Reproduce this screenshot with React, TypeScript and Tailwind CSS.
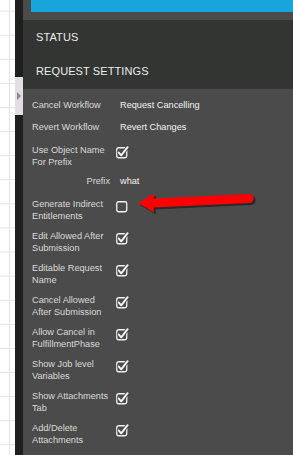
import React from "react";

const Check = ({ checked }: { checked: boolean }) => (
  <svg width="14" height="13" viewBox="0 0 14 13" className="block">
    <rect x="0.75" y="1.75" width="10" height="10" rx="1.8" fill="none" stroke="#f2f2f2" strokeWidth="1.3" />
    {checked && (
      <>
        <path d="M2.6 6.4 L5.2 9.4 L11.6 1.2" fill="none" stroke="#4b4b4b" strokeWidth="3.6" strokeLinecap="round" strokeLinejoin="round" />
        <path d="M2.6 6.4 L5.2 9.4 L11.6 1.2" fill="none" stroke="#f4f4f4" strokeWidth="1.9" strokeLinecap="round" strokeLinejoin="round" />
      </>
    )}
  </svg>
);

type Row =
  | { label: string[]; kind: "text"; value: string; h: string }
  | { label: string[]; kind: "check"; checked: boolean; h: string }
  | { label: string[]; kind: "prefix"; value: string; h: string };

const rows: Row[] = [
  { label: ["Cancel Workflow"], kind: "text", value: "Request Cancelling", h: "h-[22px]" },
  { label: ["Revert Workflow"], kind: "text", value: "Revert Changes", h: "h-[23px]" },
  { label: ["Use Object Name", "For Prefix"], kind: "check", checked: true, h: "h-[31px]" },
  { label: ["Prefix"], kind: "prefix", value: "what", h: "h-[23px]" },
  { label: ["Generate Indirect", "Entitlements"], kind: "check", checked: false, h: "h-[32px]" },
  { label: ["Edit Allowed After", "Submission"], kind: "check", checked: true, h: "h-[32px]" },
  { label: ["Editable Request", "Name"], kind: "check", checked: true, h: "h-[32px]" },
  { label: ["Cancel Allowed", "After Submission"], kind: "check", checked: true, h: "h-[32px]" },
  { label: ["Allow Cancel in", "FulfillmentPhase"], kind: "check", checked: true, h: "h-[32px]" },
  { label: ["Show Job level", "Variables"], kind: "check", checked: true, h: "h-[32px]" },
  { label: ["Show Attachments", "Tab"], kind: "check", checked: true, h: "h-[32px]" },
  { label: ["Add/Delete", "Attachments"], kind: "check", checked: true, h: "h-[32px]" },
];

const ARROW = "M3 13 L19 3.5 L18.5 8.5 L114 4 Q118.5 4 118.5 8.3 Q118.5 12.6 114 12.9 L18.5 17.5 L19 22.5 Z";

export default function App() {
  return (
    <div
      className="flex h-[455px] w-[293px] overflow-hidden"
      style={{ fontFamily: '"Liberation Sans", Arial, sans-serif' }}
    >
      {/* left grid canvas */}
      <div className="w-[15px] shrink-0 bg-white bg-[linear-gradient(to_bottom,transparent_11px,#e3e3e3_11px,#e3e3e3_12px,transparent_12px),linear-gradient(to_right,transparent_9px,#e3e3e3_9px,#e3e3e3_10px,transparent_10px)] bg-[length:100%_24.1px,100%_100%]" />
      {/* dark strip with tab */}
      <div className="flex w-[8px] shrink-0 flex-col bg-[#1f1f1f]">
        <div className="h-[77px]" />
        <div className="flex h-[38px] items-center justify-start bg-[#e2dfe2] pl-[2px]">
          <div className="h-0 w-0 border-y-[4px] border-l-[4px] border-y-transparent border-l-[#8a8a8a]" />
        </div>
      </div>
      {/* panel */}
      <div className="relative flex flex-1 flex-col bg-[#4b4b4b]">
        <div className="h-[20px] pl-[8px]">
          <div className="h-[12px] bg-[#17a5dc]" />
        </div>
        <div className="flex h-[69px] flex-col bg-[#333533] pl-[13px] text-[11px] tracking-[0.1px] text-[#ececec]">
          <div className="flex h-[34px] items-center pt-[1px]">STATUS</div>
          <div className="flex h-[34px] items-center">REQUEST SETTINGS</div>
        </div>
        <div className="flex flex-col pl-[9px] pt-[11px] text-[9.2px] leading-[11.5px]">
          {rows.map((r, i) => (
            <div key={i} className={`grid grid-cols-[84px_1fr] ${r.h}`}>
              {r.kind === "prefix" ? (
                <div className="pr-[6px] text-right text-[#dadada]">{r.label[0]}</div>
              ) : (
                <div className="text-[#dadada]">
                  {r.label.map((l, j) => (
                    <div key={j} className="whitespace-nowrap">{l}</div>
                  ))}
                </div>
              )}
              {r.kind === "check" ? (
                <div className="pt-[1px]">
                  <Check checked={r.checked} />
                </div>
              ) : (
                <div className="pl-[4px] text-[#f4f4f4]">{r.value}</div>
              )}
            </div>
          ))}
        </div>
        {/* red annotation arrow */}
        <svg
          className="absolute left-[112px] top-[190px]"
          width="124"
          height="30"
          viewBox="0 0 124 30"
        >
          <g transform="translate(2,2)" opacity="0.55">
            <path d={ARROW} fill="#111" />
          </g>
          <path d={ARROW} fill="#ff0000" />
        </svg>
      </div>
    </div>
  );
}
